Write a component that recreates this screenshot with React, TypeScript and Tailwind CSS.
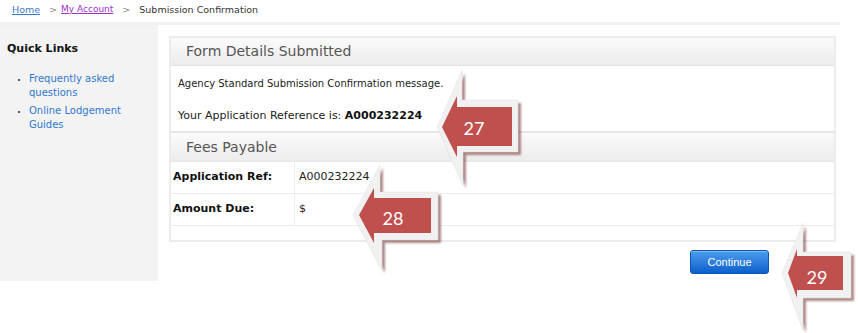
const font = "font-['DejaVu_Sans','Verdana',sans-serif]";

function Arrows() {
  const arrows = [
    {
      n: "27",
      outer: "437,127 462,70 462,100 518,100 518,152 463,152 463,185",
      inner: "442,127 457,96 457,107 512,107 512,146 457,146 457,157",
      tx: 474,
      ty: 128,
    },
    {
      n: "28",
      outer: "353,215 380,165 380,192 438,192 438,240 382,240 382,270",
      inner: "359,215 374,188 374,198 431,198 431,233 374,233 374,243",
      tx: 393,
      ty: 218,
    },
    {
      n: "29",
      outer: "782,273 803,223 803,252 851,252 851,298 803,298 803,330",
      inner: "788,273 797,249 797,256 843,256 843,290 797,290 797,298",
      tx: 817,
      ty: 277,
    },
  ];
  return (
    <svg className="absolute inset-0 pointer-events-none" width="858" height="333" viewBox="0 0 858 333">
      <defs>
        <filter id="sh" x="-20%" y="-20%" width="140%" height="140%">
          <feGaussianBlur stdDeviation="0.8" />
        </filter>
      </defs>
      {arrows.map((a) => (
        <g key={a.n}>
          <polygon points={a.outer} fill="#7a3b3b" opacity="0.6" transform="translate(3 3)" filter="url(#sh)" />
          <polygon points={a.outer} fill="#f1f1f1" stroke="#e2e2e2" strokeWidth="0.5" />
          <polygon points={a.inner} fill="#c0504d" />
          <text
            x={a.tx}
            y={a.ty}
            fill="#ffffff"
            fontSize="18"
            fontFamily="Lato, 'Open Sans', sans-serif"
            textAnchor="middle"
            dominantBaseline="central"
          >
            {a.n}
          </text>
        </g>
      ))}
    </svg>
  );
}

export default function App() {
  return (
    <div className={`relative w-[858px] h-[333px] bg-white overflow-hidden text-[#222] ${font}`}>
      {/* breadcrumb */}
      <div className="h-[20px] flex items-center pl-[12px] text-[9.5px]">
        <a href="#" className="text-[#3b76c4] underline">Home</a>
        <span className="text-[#888] ml-[9px]">&gt;</span>
        <a href="#" className="text-[#a12fc8] underline ml-[4px] text-[9px]">My Account</a>
        <span className="text-[#888] ml-[9px]">&gt;</span>
        <span className="text-[#333] ml-[9px]">Submission Confirmation</span>
      </div>

      <div className="w-[840px] mt-[2px] border-t-[3px] border-[#f0f0f0] flex">
        {/* sidebar */}
        <aside className="w-[158px] h-[256px] bg-[#f3f3f3] pt-[16px] pl-[7px]">
          <h3 className="text-[11px] font-bold text-[#111] leading-[16px]">Quick Links</h3>
          <ul className="mt-[15px] pl-[22px] pr-[18px] space-y-[4px] list-disc text-[10px] leading-[14px] marker:text-[#222] marker:text-[8px]">
            <li><a href="#" className="text-[#2f78cf]">Frequently asked questions</a></li>
            <li><a href="#" className="text-[#2f78cf]">Online Lodgement Guides</a></li>
          </ul>
        </aside>

        {/* main */}
        <main className="ml-[11px] pt-[11px] w-[667px]">
          <div className="border-2 border-[#ececec] bg-white">
            <div className="h-[28px] bg-gradient-to-b from-[#fbfbfb] to-[#ececec] border-b border-[#e2e2e2] flex items-center pl-[15px] text-[14px] text-[#555]">
              Form Details Submitted
            </div>
            <div className="h-[65px] pl-[7px] pt-[10px] text-[10px] leading-[16px]">
              <p>Agency Standard Submission Confirmation message.</p>
              <p className="mt-[16px] text-[11px]">
                Your Application Reference is: <span className="font-bold text-[#111]">A000232224</span>
              </p>
            </div>
            <div className="h-[31px] bg-gradient-to-b from-[#fbfbfb] to-[#ececec] border-t-2 border-b border-[#e6e6e6] flex items-center pl-[15px] text-[14px] text-[#555]">
              Fees Payable
            </div>
            <div className="text-[11px]">
              <div className="flex h-[32px] items-center border-b border-[#ececec]">
                <div className="w-[124px] h-full flex items-center pl-[2px] font-bold text-[#111] border-r border-[#efefef]">Application Ref:</div>
                <div className="pl-[4px]">A000232224</div>
              </div>
              <div className="flex h-[32px] items-center border-b border-[#ececec]">
                <div className="w-[124px] h-full flex items-center pl-[2px] font-bold text-[#111] border-r border-[#efefef]">Amount Due:</div>
                <div className="pl-[4px]">$</div>
              </div>
              <div className="h-[14px]" />
            </div>
          </div>

          <div className="flex justify-end pr-[67px] mt-[8px]">
            <button className="w-[79px] h-[24px] rounded-[3px] border border-[#0a55b8] bg-gradient-to-b from-[#4a9cec] to-[#0b5fcb] text-white text-[11px] font-['Liberation_Sans',Arial,sans-serif] shadow-[inset_0_1px_0_rgba(255,255,255,0.3)]">
              Continue
            </button>
          </div>
        </main>
      </div>

      <Arrows />
    </div>
  );
}
